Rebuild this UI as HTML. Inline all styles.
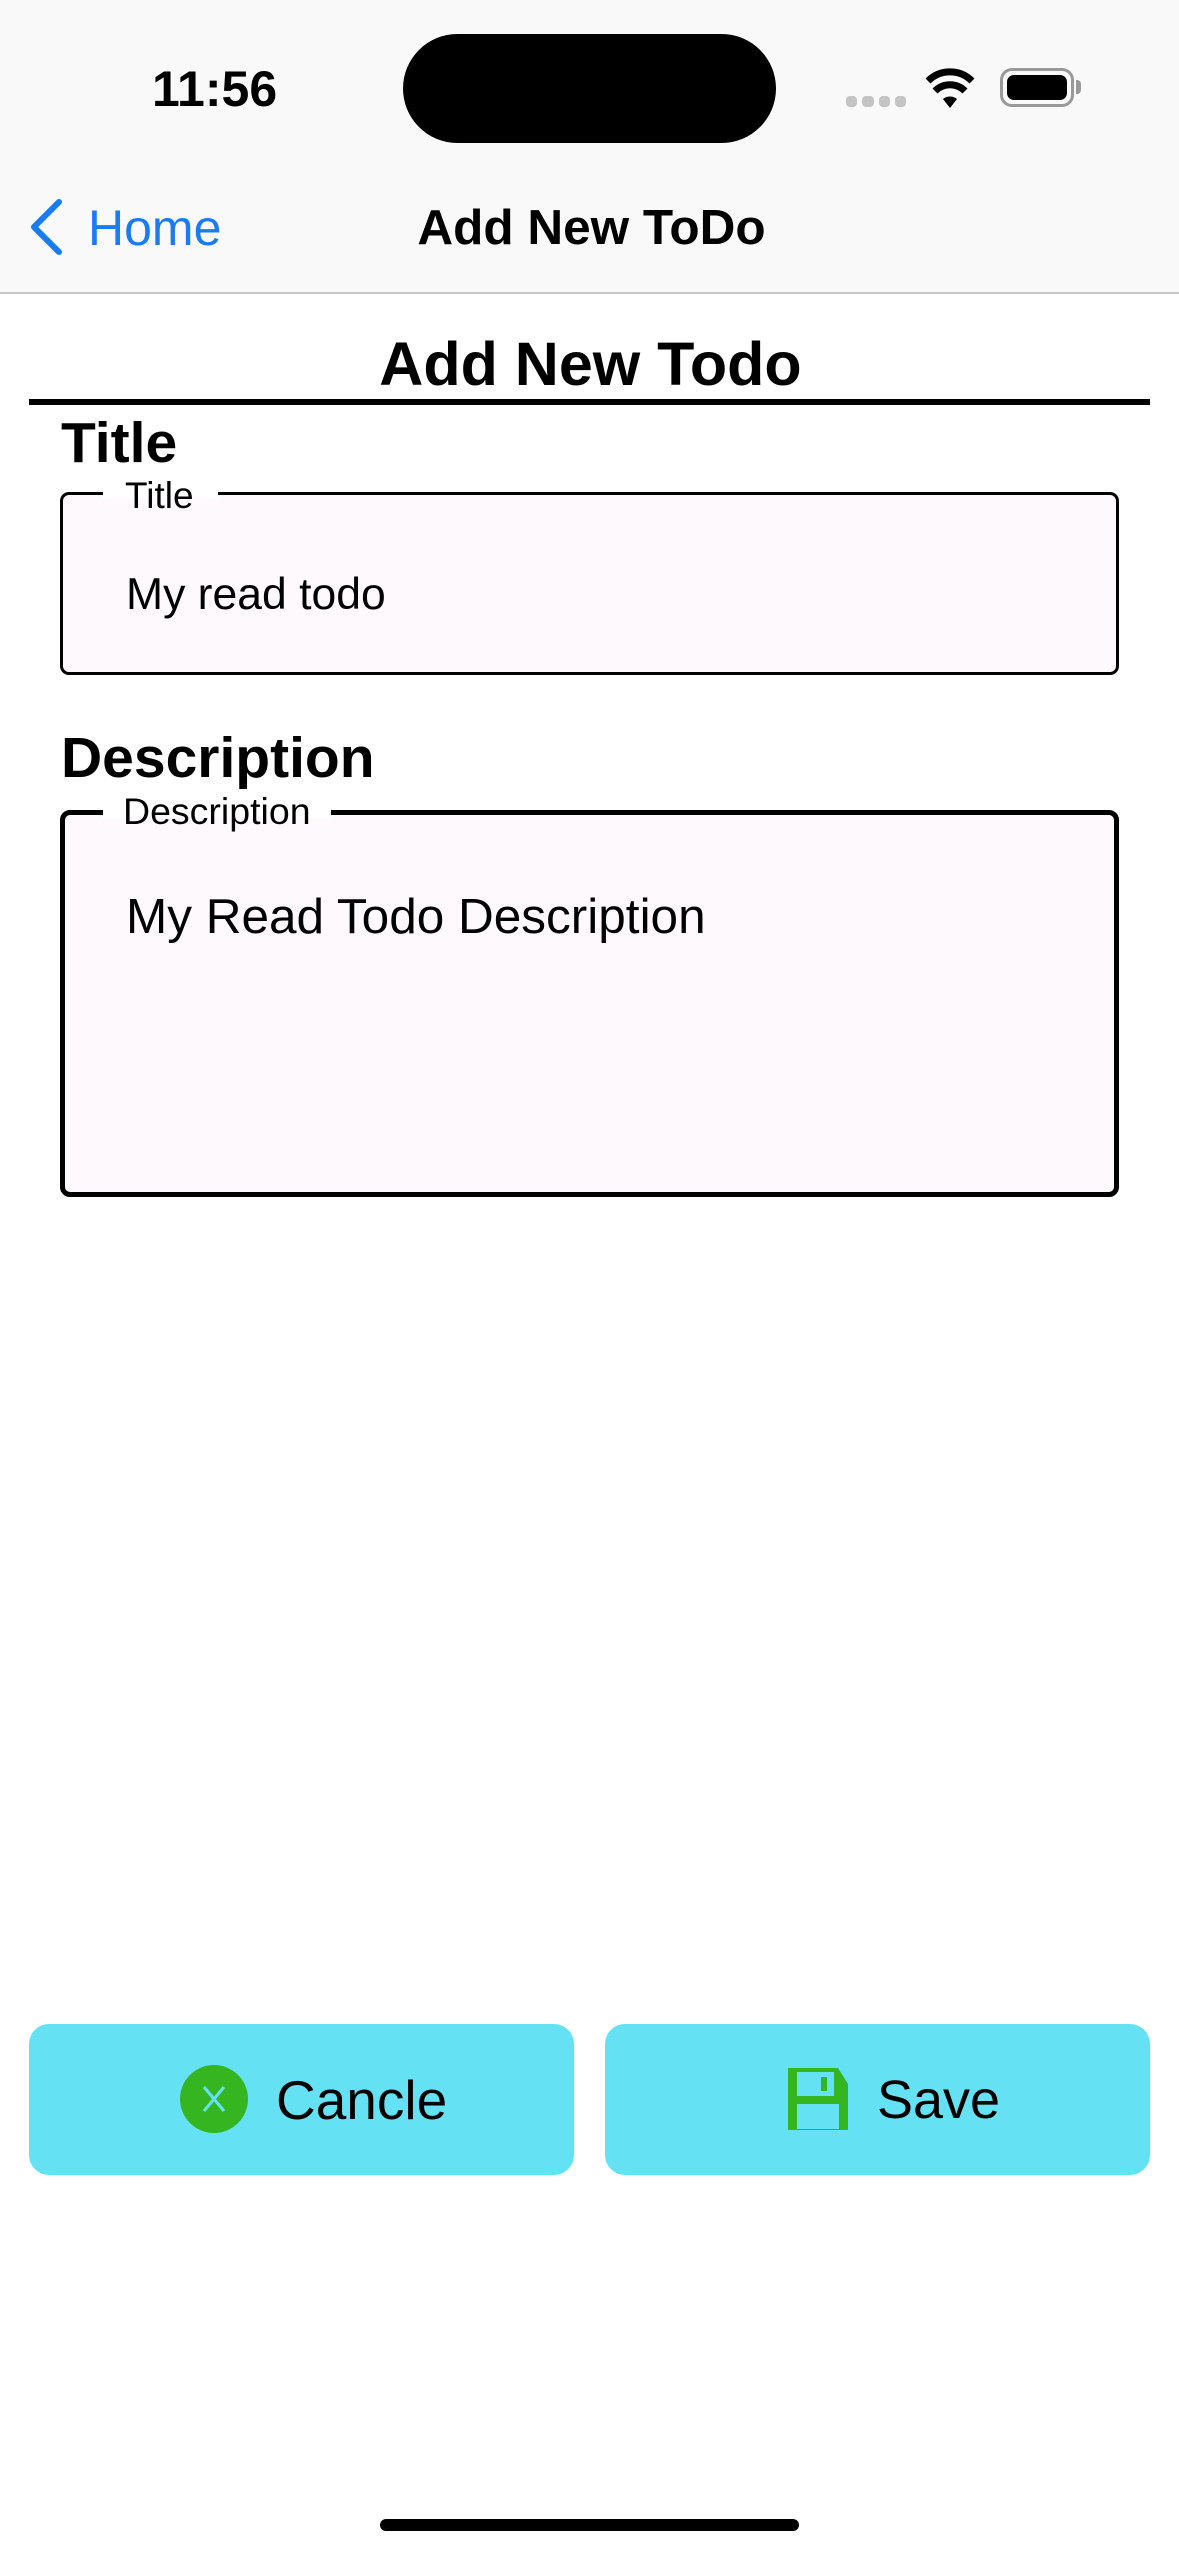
<!DOCTYPE html>
<html><head><meta charset="utf-8"><style>
*{margin:0;padding:0;box-sizing:border-box}
body{width:1179px;height:2556px;background:#fff;position:relative;overflow:hidden;font-family:"Liberation Sans",sans-serif;color:#000}
.a{position:absolute;white-space:nowrap;line-height:1}
</style></head><body>
<div class="a" style="left:0;top:0;width:1179px;height:294px;background:#f9f9f9;border-bottom:2px solid #c8c8c8"></div>
<div class="a" style="left:152px;top:64px;font-size:50px;font-weight:bold">11:56</div>
<div class="a" style="left:403px;top:34px;width:373px;height:109px;background:#000;border-radius:55px"></div>
<div class="a" style="left:846px;top:96px;width:60px;height:11px;display:flex;gap:5px">
<span style="flex:1;background:#c4c4c4;border-radius:4px"></span><span style="flex:1;background:#c4c4c4;border-radius:4px"></span><span style="flex:1;background:#c4c4c4;border-radius:4px"></span><span style="flex:1;background:#c4c4c4;border-radius:4px"></span></div>
<svg class="a" style="left:924px;top:66px" width="52" height="44" viewBox="0 0 52 44"><path d="M26 42 L19 33 A11 11 0 0 1 33 33 Z" fill="#000"/><path d="M11 25 A21 21 0 0 1 41 25" stroke="#000" stroke-width="7" fill="none"/><path d="M4 15 A31 31 0 0 1 48 15" stroke="#000" stroke-width="7" fill="none"/></svg>
<div class="a" style="left:1000px;top:68px;width:74px;height:39px;border:3px solid #999;border-radius:12px;padding:4px"><div style="width:100%;height:100%;background:#000;border-radius:7px"></div></div>
<div class="a" style="left:1076px;top:80px;width:5px;height:14px;background:#999;border-radius:0 4px 4px 0"></div>
<svg class="a" style="left:26px;top:198px" width="40" height="58" viewBox="0 0 40 58"><path d="M33 4 L8 29 L33 54" stroke="#1a7cf5" stroke-width="6" fill="none" stroke-linecap="round" stroke-linejoin="round"/></svg>
<div class="a" style="left:88px;top:203px;font-size:50px;color:#1a7cf5">Home</div>
<div class="a" style="left:0;width:1179px;text-align:center;top:203px;font-size:49.5px;font-weight:bold;padding-left:4px">Add New ToDo</div>
<div class="a" style="left:0;width:1179px;text-align:center;top:334px;font-size:61px;font-weight:bold;padding-left:2px">Add New Todo</div>
<div class="a" style="left:29px;top:399px;width:1121px;height:6px;background:#000"></div>
<div class="a" style="left:61px;top:415px;font-size:57px;font-weight:bold">Title</div>
<div class="a" style="left:60px;top:492px;width:1059px;height:183px;border:3px solid #000;border-radius:9px;background:#fdf9fd"></div>
<div class="a" style="left:103px;top:486px;width:115px;height:12px;background:#fff"></div>
<div class="a" style="left:125px;top:477px;font-size:37px">Title</div>
<div class="a" style="left:126px;top:573px;font-size:44.5px">My read todo</div>
<div class="a" style="left:61px;top:730px;font-size:57px;font-weight:bold">Description</div>
<div class="a" style="left:60px;top:810px;width:1059px;height:387px;border:5px solid #000;border-radius:10px;background:#fdf9fd"></div>
<div class="a" style="left:103px;top:804px;width:228px;height:14px;background:#fff"></div>
<div class="a" style="left:123px;top:793px;font-size:37.5px">Description</div>
<div class="a" style="left:126px;top:892px;font-size:49.5px">My Read Todo Description</div>
<div class="a" style="left:29px;top:2024px;width:545px;height:151px;background:#64e1f2;border-radius:20px"></div>
<div class="a" style="left:605px;top:2024px;width:545px;height:151px;background:#64e1f2;border-radius:20px"></div>
<svg class="a" style="left:180px;top:2065px" width="68" height="68" viewBox="0 0 68 68"><circle cx="34" cy="34" r="34" fill="#35b620"/><path d="M24 22 L44 46 M44 22 L24 46" stroke="#64e1f2" stroke-width="3"/></svg>
<div class="a" style="left:276px;top:2073px;font-size:55px">Cancle</div>
<svg class="a" style="left:786px;top:2068px" width="64" height="64" viewBox="0 0 64 64"><path d="M2 0 H52 L62 16 V62 H2 Z" fill="#35b620"/><rect x="11" y="4" width="37" height="24" fill="#64e1f2"/><rect x="35" y="9" width="6" height="14" fill="#35b620"/><rect x="11" y="36" width="42" height="25" fill="#64e1f2"/></svg>
<div class="a" style="left:877px;top:2073px;font-size:54px">Save</div>
<div class="a" style="left:380px;top:2519px;width:419px;height:12px;background:#000;border-radius:6px"></div>
</body></html>
